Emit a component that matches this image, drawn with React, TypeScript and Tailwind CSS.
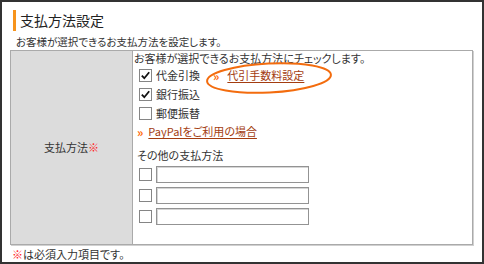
import React from 'react';

const font = "font-['Noto_Sans_CJK_JP',sans-serif] [font-feature-settings:'palt']";

const Box: React.FC<{ checked?: boolean }> = ({ checked }) => (
  <span className="flex h-[13px] w-[13px] shrink-0 items-center justify-center border border-[#858585] bg-white">
    {checked && (
      <svg width="11" height="11" viewBox="0 0 11 11">
        <path d="M1.8 5.6 L4.3 8.2 L9.2 2.2" fill="none" stroke="#111" strokeWidth="1.8" />
      </svg>
    )}
  </span>
);

const CheckRow: React.FC<{ label: string; checked?: boolean; children?: React.ReactNode }> = ({ label, checked, children }) => (
  <div className="flex h-[19px] items-center pl-[6px]">
    <Box checked={checked} />
    <span className="ml-[4px]">{label}</span>
    {children}
  </div>
);

const InputRow: React.FC = () => (
  <div className="flex h-[21px] items-center pl-[6px]">
    <Box />
    <span className="ml-[4px] h-[17px] w-[153px] border border-[#939393] bg-white shadow-[inset_1px_1px_0_#d6d6d6]" />
  </div>
);

const App: React.FC = () => {
  return (
    <div className={`relative h-[264px] w-[484px] border-2 border-[#333] bg-white pt-[8px] text-[11px] text-[#333] ${font}`}>
      <div className="ml-[11px] flex h-[21px] items-center">
        <span className="h-[21px] w-[3px] bg-[#f7941d]" />
        <h1 className="ml-[4px] text-[14px] leading-[21px] text-[#222]">支払方法設定</h1>
      </div>
      <p className="ml-[14px] mt-[3px] text-[10.5px] leading-[16px]">お客様が選択できるお支払方法を設定します。</p>

      <div className="ml-[8px] flex h-[195px] w-[463px] border border-[#aaa] shadow-[1px_1px_0_#d0d0d0]">
        <div className="flex w-[122px] items-center justify-center border-r border-[#aaa] bg-[#dcdcdc]">
          支払方法<span className="text-[#f22]">※</span>
        </div>
        <div className="flex-1">
          <p className="pl-[1px] leading-[14px]">お客様が選択できるお支払方法にチェックします。</p>
          <div className="mt-[1px]">
            <CheckRow label="代金引換" checked>
              <a className="ml-[13px] flex items-center">
                <span className="text-[12px] font-bold text-[#f60]">»</span>
                <span className="ml-[8px] text-[#a33c10] underline underline-offset-2">代引手数料設定</span>
              </a>
            </CheckRow>
            <CheckRow label="銀行振込" checked />
            <CheckRow label="郵便振替" />
          </div>
          <div className="flex h-[17px] items-center pl-[4px]">
            <span className="text-[12px] font-bold text-[#f60]">»</span>
            <span className="ml-[5px] text-[#a33c10] underline underline-offset-2">PayPalをご利用の場合</span>
          </div>
          <p className="mt-[6px] h-[18px] pl-[4px] leading-[18px]">その他の支払方法</p>
          <InputRow />
          <InputRow />
          <InputRow />
        </div>
      </div>

      <p className="ml-[10px] mt-[2px] leading-[14px]">
        <span className="text-[#f22]">※</span>は必須入力項目です。
      </p>

      <svg className="absolute left-[198px] top-[56px]" width="138" height="40" viewBox="0 0 138 40">
        <ellipse cx="69" cy="20" rx="62" ry="14.5" fill="none" stroke="#f36c0e" strokeWidth="2" transform="rotate(-3 69 20)" />
      </svg>
    </div>
  );
};

export default App;
